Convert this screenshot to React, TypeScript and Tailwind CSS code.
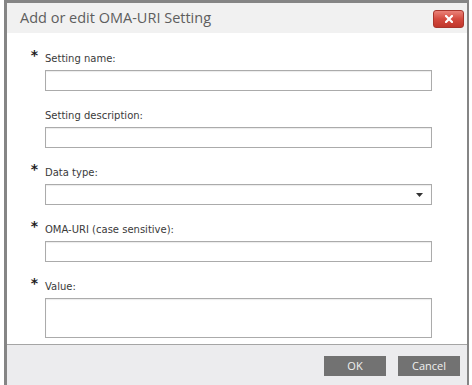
import React from "react";

type Field = { label: string; required: boolean; kind: "input" | "select" | "textarea" };

const fields: Field[] = [
  { label: "Setting name:", required: true, kind: "input" },
  { label: "Setting description:", required: false, kind: "input" },
  { label: "Data type:", required: true, kind: "select" },
  { label: "OMA-URI (case sensitive):", required: true, kind: "input" },
  { label: "Value:", required: true, kind: "textarea" },
];

function FieldRow({ f }: { f: Field }) {
  return (
    <div className="flex flex-col">
      <div className="flex h-[12px] leading-[12px]">
        <div className="w-[38px] shrink-0 flex items-start justify-end pr-[7px]">
          {f.required && (
            <span className="block font-['DejaVu_Sans',sans-serif] font-bold text-[14px] leading-[12px] text-[#1e1e1e] -mt-[4px]">
              *
            </span>
          )}
        </div>
        <span className="font-['DejaVu_Sans',sans-serif] text-[10px] leading-[12px] text-[#3a3a3a]">
          {f.label}
        </span>
      </div>
      <div
        className={
          "ml-[38px] mt-[5px] w-[387px] bg-white border border-[#ababab] shadow-[inset_0_1px_1px_rgba(0,0,0,0.08)] flex items-center justify-end " +
          (f.kind === "textarea" ? "h-[40px]" : "h-[21px]")
        }
      >
        {f.kind === "select" && (
          <svg width="7" height="4" viewBox="0 0 7 4" className="mr-[8px]">
            <path d="M0 0 L7 0 L3.5 4 Z" fill="#333" />
          </svg>
        )}
      </div>
    </div>
  );
}

export default function App() {
  return (
    <div className="w-[472px] h-[385px] bg-white overflow-hidden pl-[4px]">
      <div className="w-[465px] h-[400px] border-l-[3px] border-t-[3px] border-r-[2px] border-[#858585] flex flex-col bg-white">
        <div className="h-[30px] shrink-0 bg-[#f1f1f1] flex items-center justify-between pl-[13px] pr-[3px]">
          <span className="font-['Open_Sans',sans-serif] text-[14.5px] text-[#5e5e5e] leading-[20px]">
            Add or edit OMA-URI Setting
          </span>
          <div className="w-[31px] h-[18px] rounded-[3px] border border-[#a8352c] bg-gradient-to-b from-[#ea8178] via-[#d44a3f] to-[#c0362b] flex items-center justify-center mt-[1px]">
            <svg width="8" height="8" viewBox="0 0 8 8">
              <path d="M1 1 L7 7 M7 1 L1 7" stroke="#fff" strokeWidth="2.2" strokeLinecap="square" />
            </svg>
          </div>
        </div>
        <div className="pt-[20px] flex flex-col gap-[19px]">
          {fields.map((f) => (
            <FieldRow key={f.label} f={f} />
          ))}
        </div>
        <div className="mt-[6px] border-t border-[#a5a5a5] bg-[#ececee] flex-1 flex justify-end gap-[12px] pr-[7px] pt-[11px]">
          <div className="w-[62px] h-[20px] bg-[#727272] flex items-center justify-center font-['Open_Sans',sans-serif] text-[11px] text-[#f0f0f0]">
            OK
          </div>
          <div className="w-[62px] h-[20px] bg-[#727272] flex items-center justify-center font-['Open_Sans',sans-serif] text-[11px] text-[#f0f0f0]">
            Cancel
          </div>
        </div>
      </div>
    </div>
  );
}
